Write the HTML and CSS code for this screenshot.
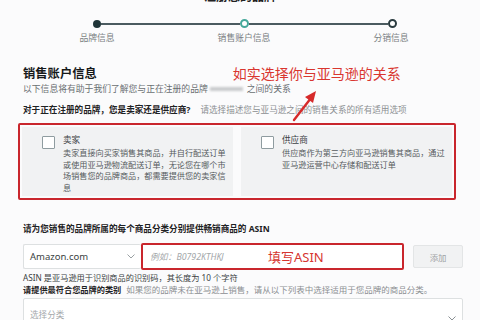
FILE: index.html
```html
<!DOCTYPE html>
<html lang="zh">
<head>
<meta charset="utf-8">
<link rel="stylesheet" href="styles.css">
</head>
<body>
<div class="page">
  <div class="title"><span>注册您的品牌</span></div>

  <div class="track">
    <span class="dot done"></span>
    <span class="bar"></span>
    <span class="dot current"></span>
    <span class="bar"></span>
    <span class="dot next"></span>
  </div>
  <div class="step-labels">
    <span>品牌信息</span>
    <span>销售账户信息</span>
    <span>分销信息</span>
  </div>

  <div class="content">
    <div class="heading-row">
      <h1 class="heading">销售账户信息</h1>
      <span class="note-big">如实选择你与亚马逊的关系</span>
    </div>
    <p class="sub">以下信息将有助于我们了解您与正在注册的品牌<span class="blur"></span>之间的关系</p>
    <p class="question"><b>对于正在注册的品牌，您是卖家还是供应商?</b><span class="hint">请选择描述您与亚马逊之间的销售关系的所有适用选项</span></p>

    <div class="mark-box">
      <div class="card">
        <span class="check"></span>
        <div class="card-text">
          <div class="card-title">卖家</div>
          <div class="card-desc">卖家直接向买家销售其商品，并自行配送订单或使用亚马逊物流配送订单，无论您在哪个市场销售您的品牌商品，都需要提供您的卖家信息</div>
        </div>
      </div>
      <div class="card">
        <span class="check"></span>
        <div class="card-text">
          <div class="card-title">供应商</div>
          <div class="card-desc">供应商作为第三方向亚马逊销售其商品，通过亚马逊运营中心存储和配送订单</div>
        </div>
      </div>
    </div>

    <p class="label"><b>请为您销售的品牌所属的每个商品分类分别提供畅销商品的 ASIN</b></p>
    <div class="asin-row">
      <div class="select small">
        <span>Amazon.com</span>
        <svg class="chev" width="8" height="5" viewBox="0 0 8 5"><polyline points="0.5,0.5 4,4 7.5,0.5" fill="none" stroke="#9aa0a3" stroke-width="1"/></svg>
      </div>
      <div class="input">
        <span class="placeholder">例如：B0792KTHKJ</span>
        <span class="note-mid">填写ASIN</span>
      </div>
      <div class="btn">添加</div>
    </div>
    <p class="helper">ASIN 是亚马逊用于识别商品的识别码，其长度为 10 个字符</p>
    <p class="label cat"><b>请提供最符合您品牌的类别</b><span class="hint">如果您的品牌未在亚马逊上销售，请从以下列表中选择适用于您品牌的商品分类。</span></p>
    <div class="select wide">
      <span class="ph">选择分类</span>
      <svg class="chev" width="8" height="5" viewBox="0 0 8 5"><polyline points="0.5,0.5 4,4 7.5,0.5" fill="none" stroke="#8a9094" stroke-width="1"/></svg>
    </div>
  </div>

  <svg class="arrow" width="30" height="34" viewBox="0 0 30 34">
    <line x1="3" y1="31" x2="20" y2="9" stroke="#d62a2a" stroke-width="2.4" stroke-linecap="round"/>
    <polygon points="25,2 14,8 22,14" fill="#d62a2a"/>
  </svg>
</div>
</body>
</html>
```

FILE: styles.css
```css
* { box-sizing: border-box; }
html, body { margin: 0; padding: 0; }
body {
  width: 480px;
  height: 320px;
  overflow: hidden;
  background: #fbfbfc;
  font-family: "Noto Sans", "Noto Sans CJK SC", sans-serif;
  color: #333;
}
.page { position: relative; display: flow-root; }
p, h1 { margin: 0; }

.title {
  height: 5px;
  overflow: hidden;
  display: flex;
  justify-content: center;
  align-items: flex-end;
  font-size: 12px;
  line-height: 16px;
  font-weight: 700;
  color: #222;
}

.track {
  margin: 14px 0 0 93px;
  width: 304px;
  height: 9px;
  display: flex;
  align-items: center;
}
.bar { flex: 1; height: 2px; background: #4b5b60; }
.dot { width: 8px; height: 8px; border-radius: 50%; flex: none; }
.dot.done { background: #1f3438; }
.dot.current { width: 9px; height: 9px; border: 2px solid #45a89a; background: #fff; }
.dot.next { width: 9px; height: 9px; border: 2px solid #2b3c40; background: #fff; }

.step-labels {
  margin: 4px 0 0 57px;
  display: flex;
  gap: 67px;
  font-size: 8.8px;
  line-height: 12px;
  color: #7a7f82;
}
.step-labels span { width: 80px; text-align: center; }

.content { padding: 0 17px 0 23px; }

.heading-row {
  margin-top: 22px;
  display: flex;
  align-items: center;
  height: 16px;
}
.heading { font-size: 12.3px; line-height: 16px; font-weight: 700; color: #16191a; }
.note-big { margin-left: 136px; font-size: 14px; color: #d9362f; line-height: 16px; }

.sub {
  margin-top: 1px;
  font-size: 8.8px;
  line-height: 12px;
  color: #6a6f72;
  white-space: nowrap;
}
.blur {
  display: inline-block;
  width: 33px;
  height: 4px;
  margin: 0 4px 1px 2px;
  background: #c9cbcd;
  filter: blur(1px);
  vertical-align: middle;
}

.question {
  margin-top: 9px;
  font-size: 8.6px;
  line-height: 12px;
  white-space: nowrap;
  color: #1e2224;
}
.hint { color: #8b8f92; font-weight: 400; margin-left: 10px; }

.mark-box {
  margin: 7px 0 0 -5px;
  width: 438px;
  height: 77px;
  border: 2px solid #c9262d;
  border-radius: 2px;
  padding: 2px;
  display: grid;
  grid-template-columns: 1fr 1fr;
  gap: 8px;
}
.card {
  background: #f1f2f3;
  display: flex;
  align-items: flex-start;
  padding: 7px 0 0 20px;
  gap: 8px;
}
.check {
  flex: none;
  margin-top: 2px;
  width: 13px;
  height: 13px;
  border: 1px solid #8f9ca0;
  background: #fff;
  border-radius: 1px;
}
.card-text { color: #555a5d; }
.card-title { font-size: 8.6px; line-height: 12px; color: #3c4144; }
.card-desc { font-size: 8.15px; line-height: 11.8px; width: 166px; margin-top: 0.8px; }

.label {
  margin-top: 23px;
  font-size: 8.6px;
  line-height: 12px;
  color: #1e2224;
  white-space: nowrap;
}

.asin-row {
  margin-top: 8px;
  display: flex;
  align-items: center;
  height: 27px;
}
.select {
  display: flex;
  align-items: center;
  justify-content: space-between;
  background: #fff;
  border: 1px solid #dde0e1;
  border-radius: 2px;
  padding: 0 6px;
}
.select.small {
  width: 118px;
  height: 25px;
  font-size: 9.5px;
  color: #3a3f42;
  border-right: none;
}
.input {
  flex: 1;
  height: 27px;
  border: 2px solid #c9262d;
  border-radius: 2px;
  background: #fff;
  display: flex;
  align-items: center;
  padding-left: 7px;
}
.placeholder {
  font-size: 8.8px;
  font-style: italic;
  color: #a3a7aa;
  width: 118px;
}
.note-mid { font-size: 13px; color: #d6352f; line-height: 16px; }
.btn {
  margin-left: 9px;
  width: 50px;
  height: 23px;
  background: #f1f2f3;
  border: 1px solid #e3e5e6;
  border-radius: 2px;
  font-size: 8.4px;
  color: #9ea2a5;
  display: flex;
  align-items: center;
  justify-content: center;
}

.helper {
  margin-top: 2px;
  font-size: 8.2px;
  line-height: 11px;
  color: #3a3f42;
  white-space: nowrap;
}
.label.cat { margin-top: 1px; }
.label.cat b { font-size: 8.2px; }
.label.cat .hint { margin-left: 5px; font-size: 8.5px; }

.select.wide {
  margin-top: 2px;
  height: 30px;
  font-size: 8.6px;
  padding: 0 6px 0 6px;
  align-items: flex-end;
  padding-bottom: 6px;
}
.ph { color: #a4a8ab; }

.arrow { position: absolute; left: 291px; top: 89px; }
```
